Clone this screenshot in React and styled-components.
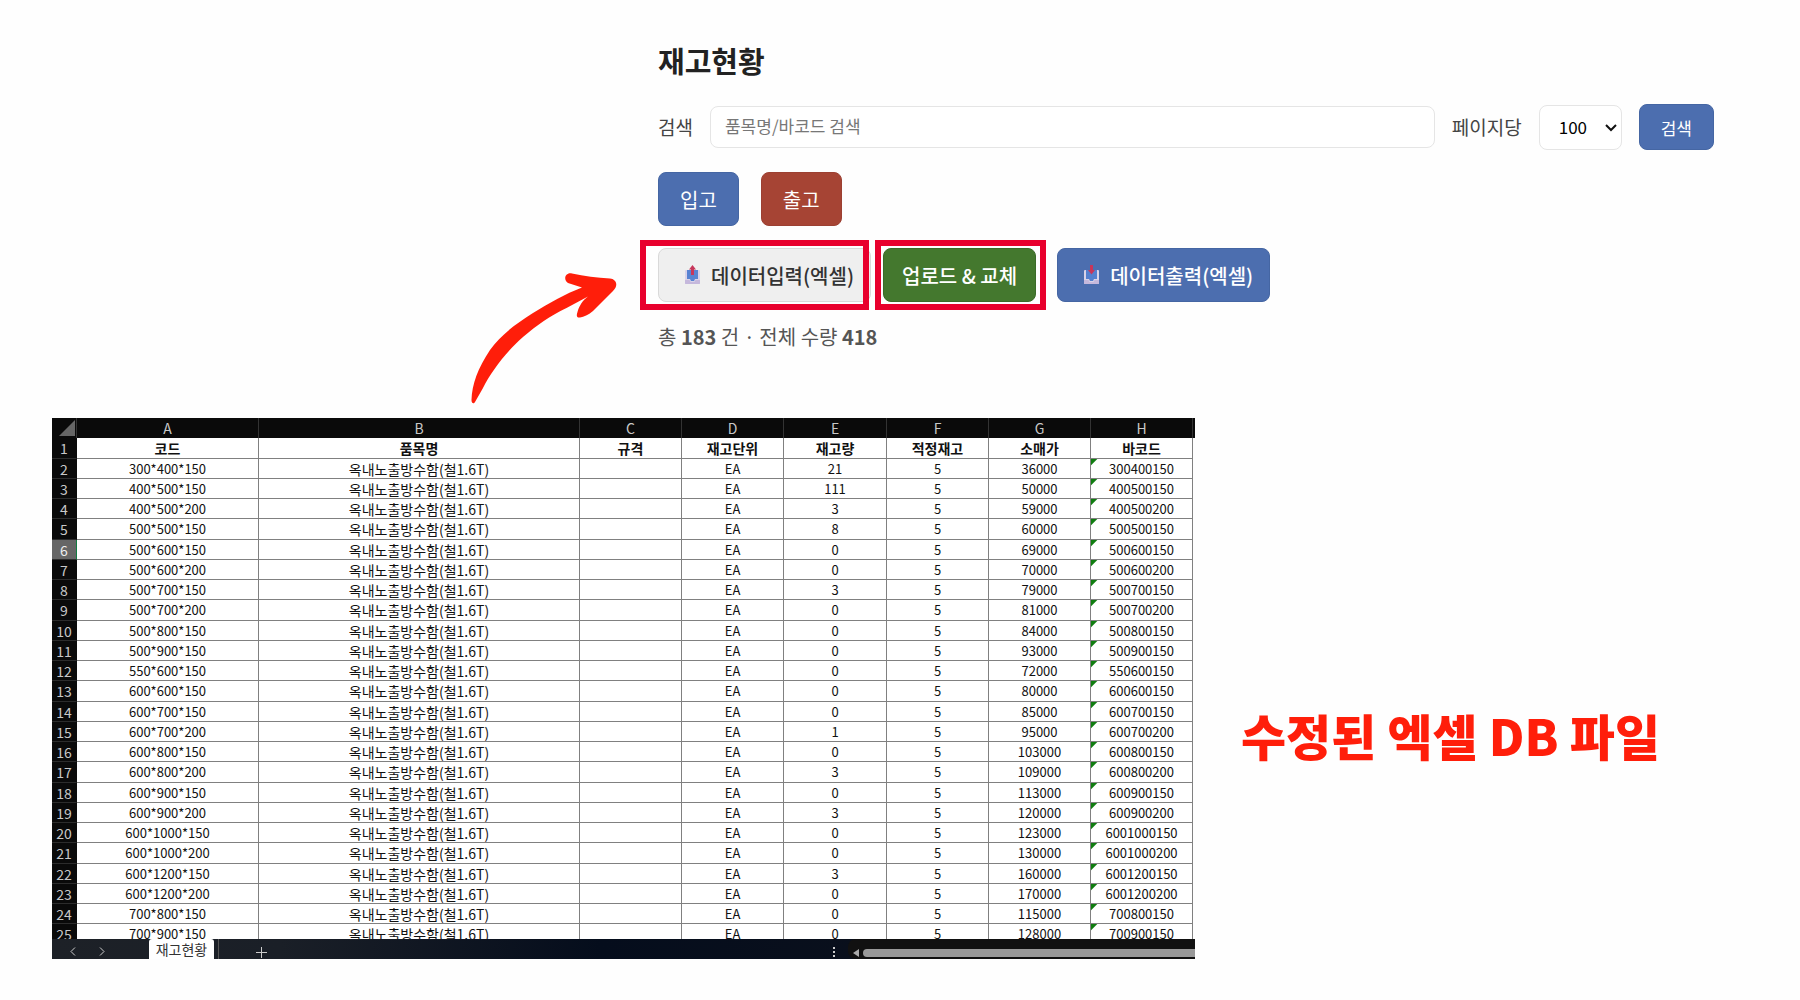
import React from "react";
import styled, { createGlobalStyle } from "styled-components";

const GlobalStyle = createGlobalStyle`
  * { box-sizing: border-box; }
  body {
    margin: 0;
    background: #fefefe;
    color: #222;
    font-family: "Noto Sans CJK KR", "Noto Sans", sans-serif;
  }
  button, input, select { font: inherit; margin: 0; }
`;

const Page = styled.main`
  padding: 43px 86px 40px 52px;
`;

const Top = styled.section`
  display: grid;
  grid-template-columns: 606fr 1056fr;
  min-height: 375px;
`;

const Pointer = styled.div`
  display: flex;
  justify-content: flex-end;
  align-items: flex-end;
  padding: 0 41px 12px 0;
`;

const Panel = styled.div`
  display: flex;
  flex-direction: column;
  align-items: stretch;
`;

const Title = styled.h1`
  margin: 0 0 27px;
  font-size: 29px;
  line-height: 34px;
  font-weight: 700;
`;

const SearchForm = styled.form`
  display: flex;
  align-items: center;
  gap: 17px;
  height: 46px;
  margin-bottom: 22px;
`;

const Label = styled.label`
  font-size: 19px;
  line-height: 28px;
  color: #444;
  white-space: nowrap;
`;

const SearchInput = styled.input`
  flex: 1;
  min-width: 0;
  height: 42px;
  padding: 0 14px 4px;
  border: 1px solid #e5e5e5;
  border-radius: 8px;
  background: #fff;
  font-size: 17px;
  &::placeholder { color: #777; opacity: 1; }
`;

const SelectBox = styled.div`
  position: relative;
  display: flex;
  svg {
    position: absolute;
    right: 5px;
    top: 19px;
    pointer-events: none;
  }
`;

const PageSize = styled.select`
  appearance: none;
  width: 83px;
  height: 45px;
  padding: 0 0 2px 19px;
  border: 1px solid #e5e5e5;
  border-radius: 8px;
  background: #fff;
  color: #000;
  font-size: 17px;
`;

const tones = {
  blue: { bg: "#4c6eaf", line: "#4566a3", fg: "#fff" },
  red: { bg: "#a64434", line: "#9c4032", fg: "#fff" },
  green: { bg: "#44782e", line: "#3b6a28", fg: "#fff" },
  plain: { bg: "#efefef", line: "#d9d9d9", fg: "#333" },
};

const paddings = {
  normal: "0 21px",
  tight: "0 18px",
  icon: "0 16px 0 25px",
};

const Button = styled.button`
  display: inline-flex;
  align-items: center;
  justify-content: center;
  gap: 10px;
  height: ${(p) => (p.$compact ? 46 : 54)}px;
  padding: ${(p) => paddings[p.$pad || "normal"]};
  border: 1px solid ${(p) => tones[p.$tone].line};
  border-radius: 8px;
  background: ${(p) => tones[p.$tone].bg};
  color: ${(p) => tones[p.$tone].fg};
  font-size: ${(p) => (p.$compact ? 17 : 20)}px;
  font-weight: ${(p) => (p.$strong ? 500 : 400)};
  white-space: nowrap;
  cursor: pointer;
`;

const StockActions = styled.div`
  display: flex;
  gap: 22px;
  margin-bottom: 22px;
`;

const FileActions = styled.div`
  display: flex;
  gap: 21px;
  margin-bottom: 20px;
`;

const Highlighted = styled.div`
  position: relative;
  margin-right: ${(p) => (p.$tight ? "-9px" : "0")};
  &::after {
    content: "";
    position: absolute;
    inset: ${(p) => p.$inset};
    border: 6px solid #e8002d;
    pointer-events: none;
  }
`;

const Summary = styled.p`
  margin: 0;
  font-size: 20px;
  line-height: 30px;
  color: #555;
`;

const Bottom = styled.section`
  display: grid;
  grid-template-columns: 1143fr 519fr;
`;

const Sheet = styled.div`
  min-width: 0;
`;

const Rows = styled.div`
  height: 521px;
  overflow: hidden;
  padding-right: 2px;
  background: linear-gradient(#0a0a0a 20px, #fefefe 20px);
`;

const Grid = styled.table`
  width: 100%;
  table-layout: fixed;
  border-collapse: separate;
  border-spacing: 0;
  font-size: 13px;
  line-height: 18px;
  color: #111;
  text-align: center;
  tbody tr { height: 20px; }
  tbody tr:nth-child(4n + 1) { height: 21px; }
`;

const ColumnLetter = styled.th`
  height: 20px;
  padding: 0;
  border-right: 1px solid #333;
  background: #0a0a0a;
  color: #c8c8c8;
  font-size: 14px;
  font-weight: 400;
`;

const Corner = styled(ColumnLetter)`
  svg { display: block; margin-left: auto; margin-right: 1px; }
`;

const RowNumber = styled.th`
  padding: 0;
  border-bottom: 1px solid #2c2c2c;
  border-right: 1px solid ${(p) => (p.$active ? "#107c41" : "#0a0a0a")};
  background: ${(p) => (p.$active ? "#666" : "#0a0a0a")};
  color: ${(p) => (p.$active ? "#eee" : "#c8c8c8")};
  font-size: 14px;
  font-weight: 400;
`;

const Cell = styled.td`
  padding: 0;
  border-right: 1px solid #808080;
  border-bottom: 1px solid #808080;
  background: ${(p) =>
    p.$flag ? "linear-gradient(135deg, #107c10 4px, transparent 5px) #fff" : "#fff"};
  font-size: ${(p) => (p.$hangul ? 14 : 13)}px;
  font-weight: ${(p) => (p.$head ? 700 : 400)};
  white-space: nowrap;
`;

const TabBar = styled.div`
  display: flex;
  height: 20px;
  background: linear-gradient(90deg, #1d2127 0, #1a1f27 20%, #050d1c 48%, #0a101c 75%, #1a1d22 100%);
  color: #ddd;
`;

const TabNav = styled.div`
  display: flex;
  align-items: center;
  gap: 13px;
  width: 97px;
  padding: 5px 0 0 13px;
`;

const IconButton = styled.button`
  display: grid;
  place-items: center;
  width: 16px;
  height: 14px;
  padding: 0;
  border: 0;
  background: none;
  color: #ccc;
`;

const SheetTab = styled.button`
  width: 65px;
  padding: 1px 0 0;
  border: 0;
  border-radius: 3px 3px 0 0;
  background: #fff;
  color: #333;
  font-size: 14px;
  line-height: 19px;
`;

const TabTools = styled.div`
  display: flex;
  flex: 1;
  justify-content: space-between;
  align-items: center;
  margin-left: 4px;
  padding: 6px 6px 0 34px;
  border-left: 1px solid #555;
`;

const ScrollTrack = styled.div`
  display: flex;
  align-items: center;
  gap: 4px;
  width: 347px;
  padding: 8px 0 0 5px;
  border-radius: 8px 0 0 8px;
  background: #111;
`;

const Thumb = styled.div`
  flex: 1;
  height: 8px;
  border-radius: 4px 0 0 4px;
  background: #999;
`;

const Caption = styled.h2`
  align-self: center;
  margin: 0;
  padding: 92px 0 0 46px;
  color: #ff1e0a;
  font-size: 49px;
  line-height: 72px;
  font-weight: 900;
  white-space: nowrap;
`;

function TrayIcon({ up }) {
  return (
    <svg width="17" height="20" viewBox="0 0 17 20" aria-hidden="true">
      <path d="M2 5h13a1 1 0 0 1 1 1v12a1 1 0 0 1-1 1H2a1 1 0 0 1-1-1V6a1 1 0 0 1 1-1z" fill="#d9d3e8" />
      <path d="M3 5h11v9h-3l-1 2H7l-1-2H3z" fill={up ? "#5783d2" : "#5580cf"} />
      <path d="M1 15h4.500l1 2h4l1-2H16v3.500l-.5.5h-14l-.5-.5z" fill="#c5b8dc" />
      <path
        d={up ? "M8.500 0L12 4.500h-2V10H7V4.500H5z" : "M7 0h3v5h2L8.500 9.500 5 5h2z"}
        fill="#c7365a"
      />
    </svg>
  );
}

function SwooshArrow() {
  return (
    <svg width="147" height="134" viewBox="0 0 147 134" aria-hidden="true">
      <path
        fill="#ff1e0a"
        d="M1.500 128C2 112 8 96 20 78C30 64 44 53 63 41C79 31 95 22 112 15.500L98 11C93 8 95 0 102 1.500C114 4 127 6 140 6.500C146 7 149 13 143 19L123 39C118 43 114 45 110 45.500C107 46 106 44 107.500 40C109 34 113 28 118 24.500L96.500 36C80 44 67 53 53 65C36 80 21 100 13 116L5 130C4 132 1.500 132 1.500 128Z"
      />
    </svg>
  );
}

const columns = [
  ["A", 182, "코드"],
  ["B", 321, "품목명"],
  ["C", 102, "규격"],
  ["D", 102, "재고단위"],
  ["E", 103, "재고량"],
  ["F", 102, "적정재고"],
  ["G", 102, "소매가"],
  ["H", 102, "바코드"],
];

const stock = [
  ["300*400*150", 21, 36000],
  ["400*500*150", 111, 50000],
  ["400*500*200", 3, 59000],
  ["500*500*150", 8, 60000],
  ["500*600*150", 0, 69000],
  ["500*600*200", 0, 70000],
  ["500*700*150", 3, 79000],
  ["500*700*200", 0, 81000],
  ["500*800*150", 0, 84000],
  ["500*900*150", 0, 93000],
  ["550*600*150", 0, 72000],
  ["600*600*150", 0, 80000],
  ["600*700*150", 0, 85000],
  ["600*700*200", 1, 95000],
  ["600*800*150", 0, 103000],
  ["600*800*200", 3, 109000],
  ["600*900*150", 0, 113000],
  ["600*900*200", 3, 120000],
  ["600*1000*150", 0, 123000],
  ["600*1000*200", 0, 130000],
  ["600*1200*150", 3, 160000],
  ["600*1200*200", 0, 170000],
  ["700*800*150", 0, 115000],
  ["700*900*150", 0, 128000],
];

function StockSheet() {
  return (
    <Sheet>
      <Rows>
        <Grid>
          <colgroup>
            <col style={{ width: 25 }} />
            {columns.map(([letter, width]) => (
              <col key={letter} style={{ width }} />
            ))}
          </colgroup>
          <thead>
            <tr>
              <Corner aria-label="전체 선택">
                <svg width="16" height="16" viewBox="0 0 16 16" aria-hidden="true">
                  <path d="M16 0v16H0z" fill="#666" />
                </svg>
              </Corner>
              {columns.map(([letter]) => (
                <ColumnLetter key={letter} scope="col">{letter}</ColumnLetter>
              ))}
            </tr>
          </thead>
          <tbody>
            <tr>
              <RowNumber scope="row">1</RowNumber>
              {columns.map(([letter, , name]) => (
                <Cell key={letter} $head $hangul>{name}</Cell>
              ))}
            </tr>
            {stock.map(([code, count, price], i) => (
              <tr key={code}>
                <RowNumber scope="row" $active={i === 4}>{i + 2}</RowNumber>
                <Cell>{code}</Cell>
                <Cell $hangul>옥내노출방수함(철1.6T)</Cell>
                <Cell />
                <Cell>EA</Cell>
                <Cell>{count}</Cell>
                <Cell>5</Cell>
                <Cell>{price}</Cell>
                <Cell $flag>{code.replaceAll("*", "")}</Cell>
              </tr>
            ))}
          </tbody>
        </Grid>
      </Rows>
      <TabBar>
        <TabNav>
          <IconButton aria-label="이전 시트">
            <svg width="6" height="9" viewBox="0 0 6 9" fill="none" stroke="currentColor">
              <path d="M5 .5l-4 4 4 4" />
            </svg>
          </IconButton>
          <IconButton aria-label="다음 시트">
            <svg width="6" height="9" viewBox="0 0 6 9" fill="none" stroke="currentColor">
              <path d="M1 .5l4 4-4 4" />
            </svg>
          </IconButton>
        </TabNav>
        <SheetTab>재고현황</SheetTab>
        <TabTools>
          <IconButton aria-label="시트 추가">
            <svg width="11" height="11" viewBox="0 0 11 11" fill="none" stroke="currentColor">
              <path d="M5.500 0v11M0 5.500h11" />
            </svg>
          </IconButton>
          <IconButton aria-label="더 보기">
            <svg width="3" height="10" viewBox="0 0 3 10" fill="currentColor">
              <path d="M0 0h2v2H0zM0 4h2v2H0zM0 8h2v2H0z" />
            </svg>
          </IconButton>
        </TabTools>
        <ScrollTrack>
          <svg width="6" height="8" viewBox="0 0 6 8" aria-hidden="true">
            <path d="M6 0v8L0 4z" fill="#aaa" />
          </svg>
          <Thumb />
        </ScrollTrack>
      </TabBar>
    </Sheet>
  );
}

export default function App() {
  return (
    <>
      <GlobalStyle />
      <Page>
        <Top>
          <Pointer>
            <SwooshArrow />
          </Pointer>
          <Panel>
            <Title>재고현황</Title>
            <SearchForm onSubmit={(e) => e.preventDefault()}>
              <Label htmlFor="query">검색</Label>
              <SearchInput id="query" type="text" placeholder="품목명/바코드 검색" />
              <Label htmlFor="size">페이지당</Label>
              <SelectBox>
                <PageSize id="size" defaultValue="100">
                  <option>100</option>
                </PageSize>
                <svg width="12" height="8" viewBox="0 0 12 8" fill="none" stroke="#111" strokeWidth="2" aria-hidden="true">
                  <path d="M1 1l5 5 5-5" />
                </svg>
              </SelectBox>
              <Button $tone="blue" $compact type="submit">검색</Button>
            </SearchForm>
            <StockActions>
              <Button $tone="blue">입고</Button>
              <Button $tone="red">출고</Button>
            </StockActions>
            <FileActions>
              <Highlighted $tight $inset="-8px 2px -8px -18px">
                <Button $tone="plain" $strong $pad="icon">
                  <TrayIcon up />
                  데이터입력(엑셀)
                </Button>
              </Highlighted>
              <Highlighted $inset="-8px -10px -8px -8px">
                <Button $tone="green" $strong $pad="tight">업로드 &amp; 교체</Button>
              </Highlighted>
              <Button $tone="blue" $strong $pad="icon">
                <TrayIcon />
                데이터출력(엑셀)
              </Button>
            </FileActions>
            <Summary>
              총 <b>183</b> 건 · 전체 수량 <b>418</b>
            </Summary>
          </Panel>
        </Top>
        <Bottom>
          <StockSheet />
          <Caption>수정된 엑셀 DB 파일</Caption>
        </Bottom>
      </Page>
    </>
  );
}
